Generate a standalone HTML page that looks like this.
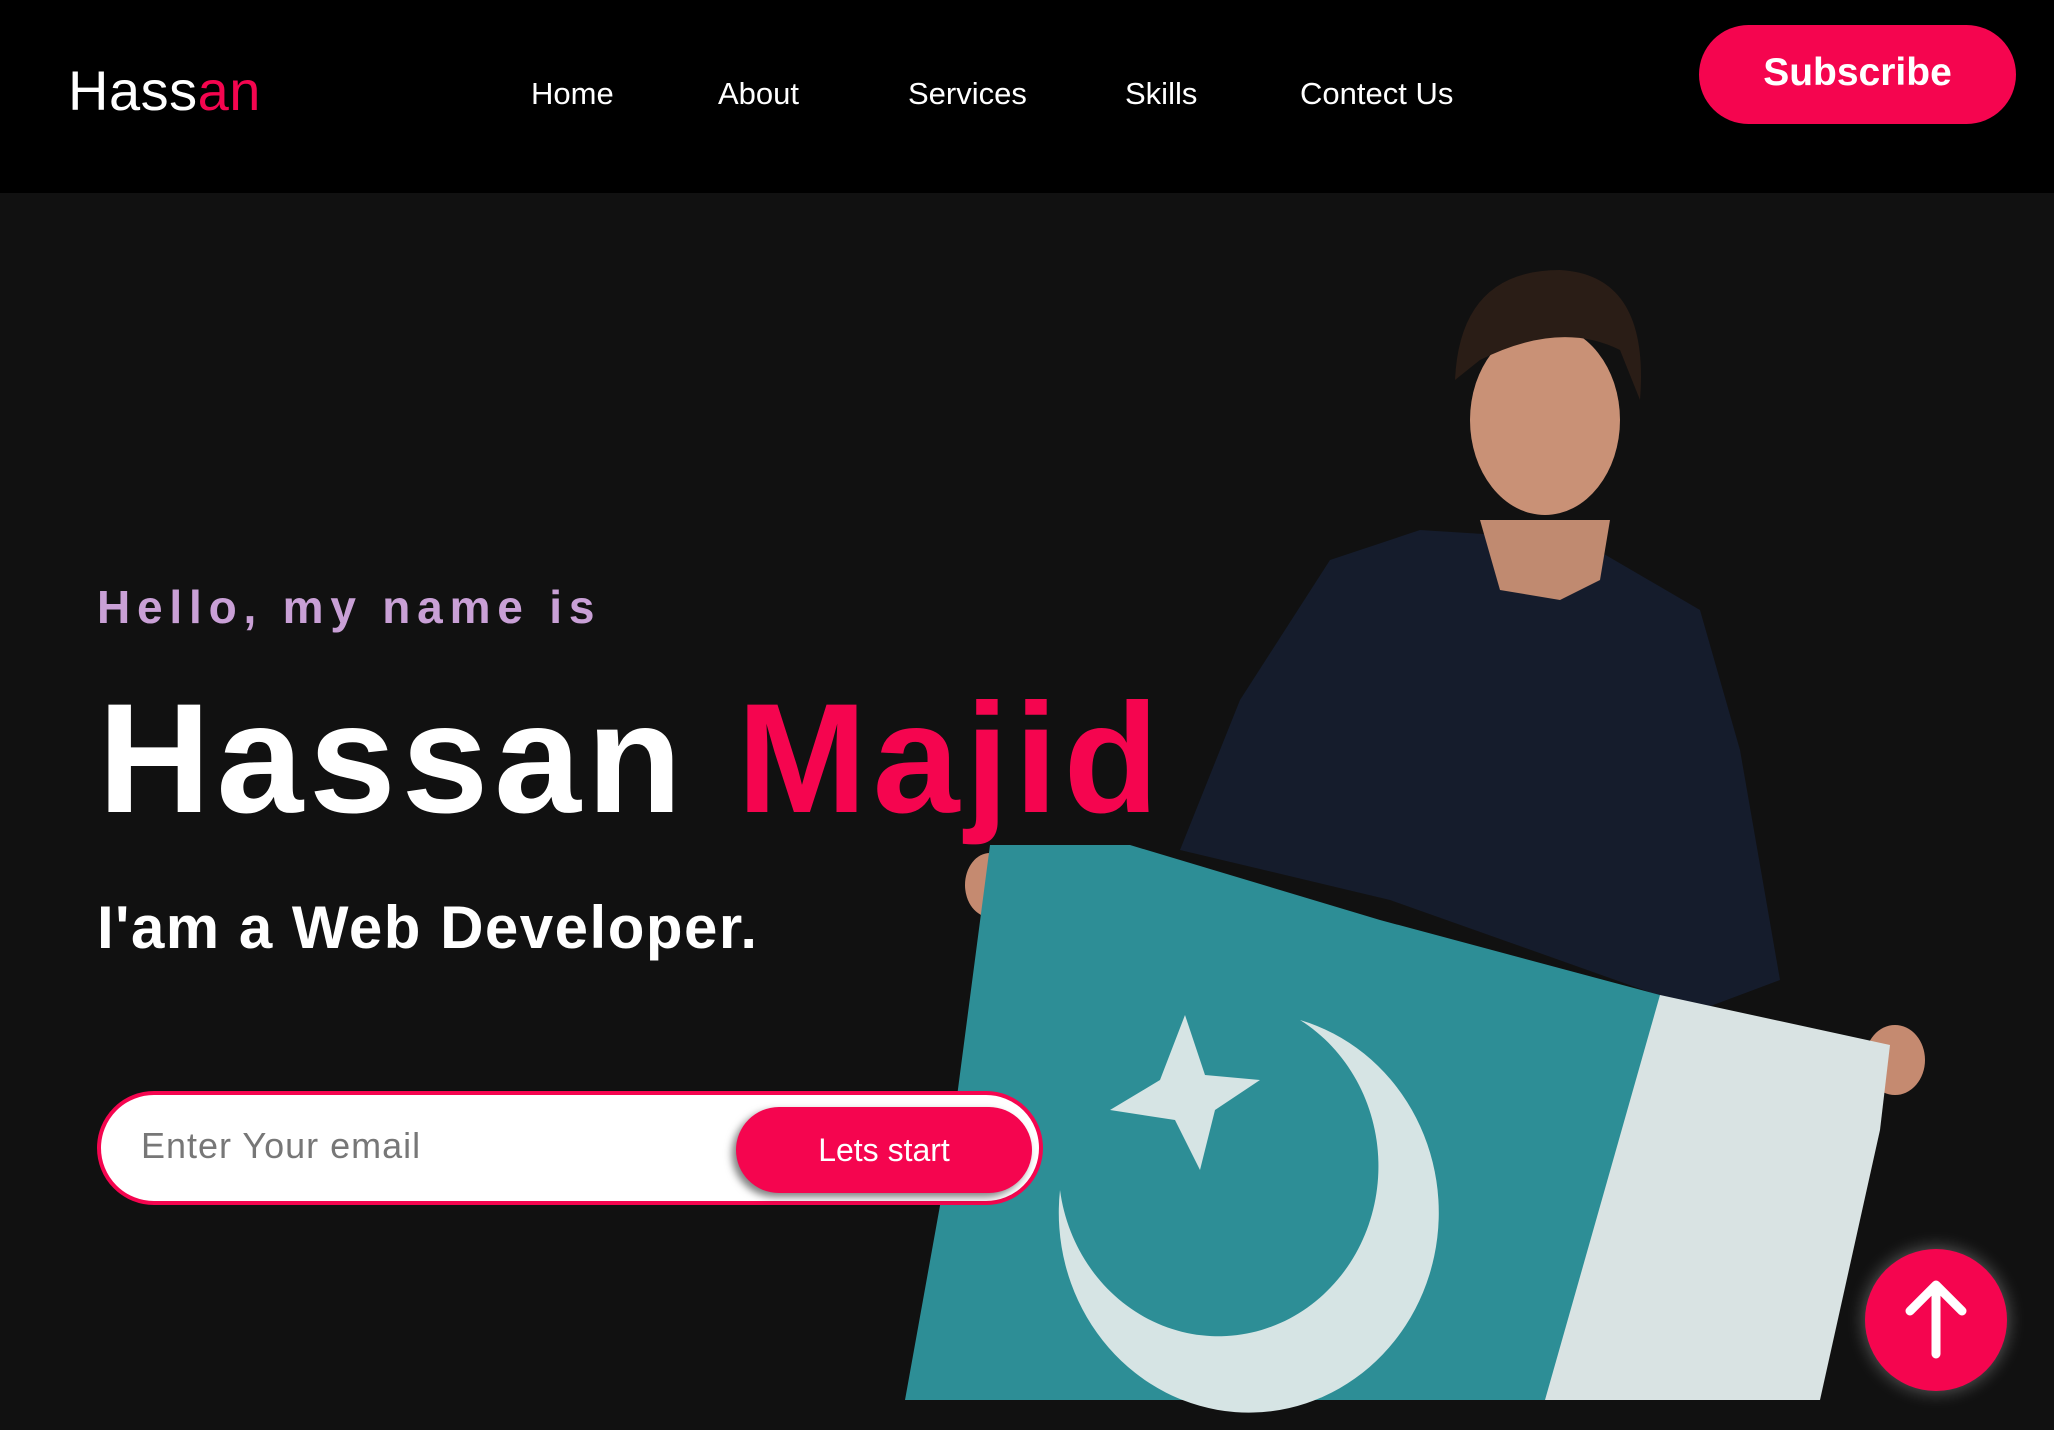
<!DOCTYPE html>
<html><head><meta charset="utf-8"><style>
*{margin:0;padding:0;box-sizing:border-box}
body{width:2054px;height:1430px;background:#111;overflow:hidden;font-family:"Liberation Sans",sans-serif;position:relative}
header{position:absolute;left:0;top:0;width:2054px;height:193px;background:#000}
.logo{position:absolute;left:68px;top:58px;font-size:56px;color:#fff;letter-spacing:0.5px}
.logo span{color:#f5054f}
.nav a{position:absolute;top:76px;color:#fff;font-size:31px;text-decoration:none}
.sub{position:absolute;left:1699px;top:25px;width:317px;height:99px;border-radius:50px;background:#f5054f;color:#fff;font-weight:bold;font-size:39px;text-align:center;line-height:95px}
.hello{position:absolute;left:97px;top:580px;color:#c9a0d6;font-weight:bold;font-size:46px;letter-spacing:6.8px}
.name{position:absolute;left:98px;top:670px;color:#fff;font-weight:bold;font-size:156px;letter-spacing:5.8px;white-space:nowrap}
.name span{color:#f5054f}
.dev{position:absolute;left:97px;top:893px;color:#fff;font-weight:bold;font-size:60px;letter-spacing:1.5px}
.form{position:absolute;left:97px;top:1091px;width:946px;height:114px;border-radius:57px;background:#fff;border:4px solid #f5054f;z-index:3}
.form .ph{position:absolute;left:40px;top:30px;color:#777;font-size:36px;letter-spacing:1px}
.form .btn{position:absolute;left:635px;top:12px;width:296px;height:86px;border-radius:43px;background:#f5054f;color:#fff;font-size:32px;text-align:center;line-height:86px;box-shadow:-4px 4px 8px rgba(0,0,0,.5)}
.up{position:absolute;left:1865px;top:1249px;width:142px;height:142px;border-radius:50%;background:#f5054f;box-shadow:0 0 18px rgba(255,255,255,.35);z-index:4}
</style></head><body>
<header>
<div class="logo">Hass<span>an</span></div>
<div class="nav"><a style="left:531px">Home</a><a style="left:718px">About</a><a style="left:908px">Services</a><a style="left:1125px">Skills</a><a style="left:1300px">Contect Us</a></div>
<div class="sub">Subscribe</div>
</header>
<svg style="position:absolute;left:0;top:0" width="2054" height="1430">
<path d="M1330 560 L1420 530 L1580 540 L1700 610 L1740 750 L1780 980 L1700 1010 L1390 900 L1180 850 L1240 700 Z" fill="#151c2c"/>
<path d="M1480 520 L1610 520 L1600 580 L1560 600 L1500 590 Z" fill="#c08a70"/>
<ellipse cx="1545" cy="420" rx="75" ry="95" fill="#c99176"/>
<path d="M1455 380 Q1460 270 1560 270 Q1650 275 1640 400 L1620 350 Q1560 320 1480 360 Z" fill="#2a1d16"/>
<ellipse cx="990" cy="885" rx="25" ry="32" fill="#c58a70"/>
<ellipse cx="1895" cy="1060" rx="30" ry="35" fill="#c58a70"/>
<path d="M990 845 L1130 845 L1380 920 L1660 995 L1660 1400 L905 1400 L950 1150 Z" fill="#2d8e96"/>
<path d="M1660 995 L1890 1045 L1880 1130 L1820 1400 L1545 1400 Z" fill="#d9e3e3"/>
<path d="M1300 1020 A190 200 0 1 1 1060 1190 A160 170 0 1 0 1300 1020 Z" fill="#d6e4e4"/>
<polygon points="1185,1015 1205,1075 1260,1080 1215,1110 1200,1170 1175,1120 1110,1110 1160,1080" fill="#d6e4e4"/>
</svg>
<div class="hello">Hello, my name is</div>
<div class="name">Hassan <span>Majid</span></div>
<div class="dev">I'am a Web Developer.</div>
<div class="form"><div class="ph">Enter Your email</div><div class="btn">Lets start</div></div>
<div class="up"><svg width="142" height="142" viewBox="0 0 142 142"><path d="M71 105 V38 M45 62 L71 36 L97 62" stroke="#fff" stroke-width="9" fill="none" stroke-linecap="round" stroke-linejoin="round"/></svg></div>
</body></html>
